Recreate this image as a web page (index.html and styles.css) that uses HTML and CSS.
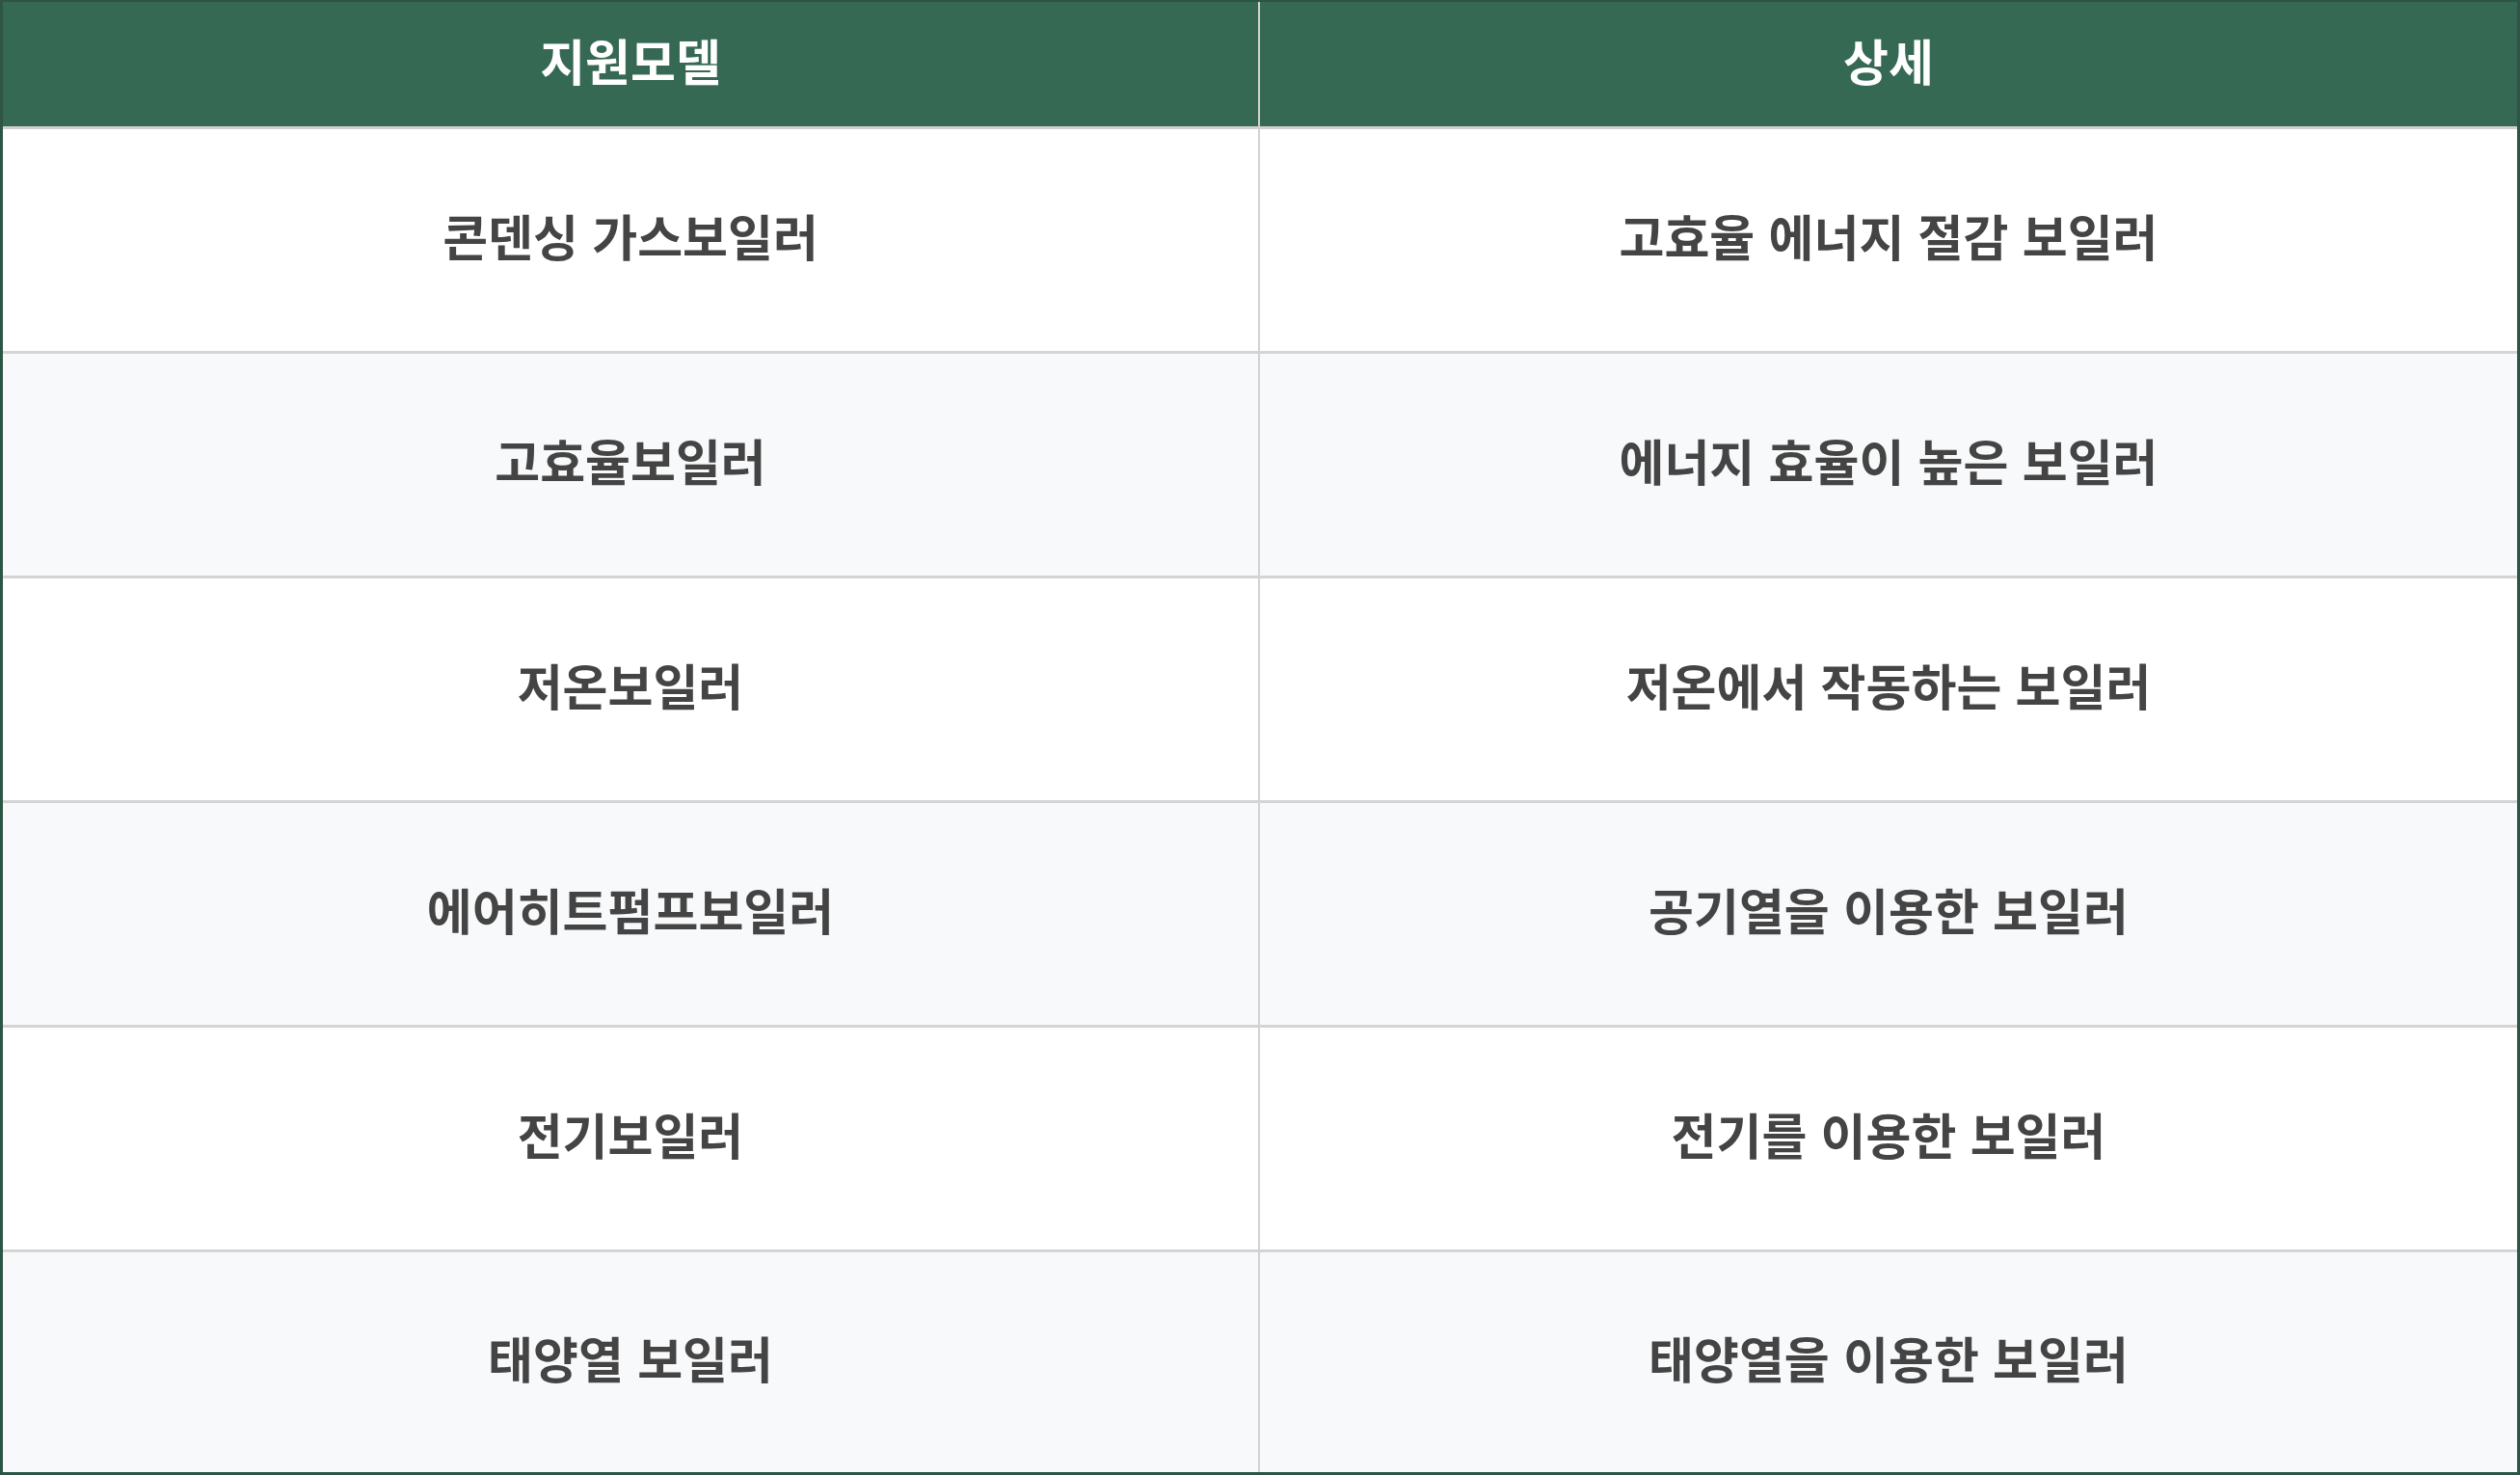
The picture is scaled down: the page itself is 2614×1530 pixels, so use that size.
FILE: index.html
```html
<!DOCTYPE html>
<html lang="ko">
<head>
<meta charset="utf-8">
<title>지원모델</title>
<link rel="stylesheet" href="styles.css">
</head>
<body>
<div class="frame">
  <table class="models">
    <thead>
      <tr><th>지원모델</th><th>상세</th></tr>
    </thead>
    <tbody>
      <tr><td>콘덴싱 가스보일러</td><td>고효율 에너지 절감 보일러</td></tr>
      <tr><td>고효율보일러</td><td>에너지 효율이 높은 보일러</td></tr>
      <tr><td>저온보일러</td><td>저온에서 작동하는 보일러</td></tr>
      <tr><td>에어히트펌프보일러</td><td>공기열을 이용한 보일러</td></tr>
      <tr><td>전기보일러</td><td>전기를 이용한 보일러</td></tr>
      <tr><td>태양열 보일러</td><td>태양열을 이용한 보일러</td></tr>
    </tbody>
  </table>
</div>
</body>
</html>
```

FILE: styles.css
```css
html, body {
  margin: 0;
  padding: 0;
  background: #ffffff;
}

.frame {
  box-sizing: border-box;
  width: 2614px;
  height: 1530px;
  border: 3px solid #2d5445;
  border-top-width: 2px;
  background: #ffffff;
  overflow: hidden;
}

.models {
  width: 100%;
  border-collapse: separate;
  border-spacing: 0;
  table-layout: fixed;
  font-family: "Noto Sans CJK KR", "Noto Sans", sans-serif;
  font-weight: 700;
}

.models th,
.models td {
  box-sizing: border-box;
  text-align: center;
  vertical-align: middle;
  padding: 0 0 10px 0;
  font-size: 51px;
}

.models th:first-child,
.models td:first-child {
  border-right: 2px solid #d2d2d2;
}

.models th {
  height: 132px;
  background: #366954;
  color: #ffffff;
  border-bottom: 3px solid #d0d0d0;
}

.models td {
  height: 233px;
  color: #444444;
  border-bottom: 3px solid #d4d4d4;
}

.models tbody tr:last-child td {
  height: 228px;
  border-bottom: 0;
}

.models tbody tr:nth-child(even) td {
  background: #f8f9fa;
}
```
